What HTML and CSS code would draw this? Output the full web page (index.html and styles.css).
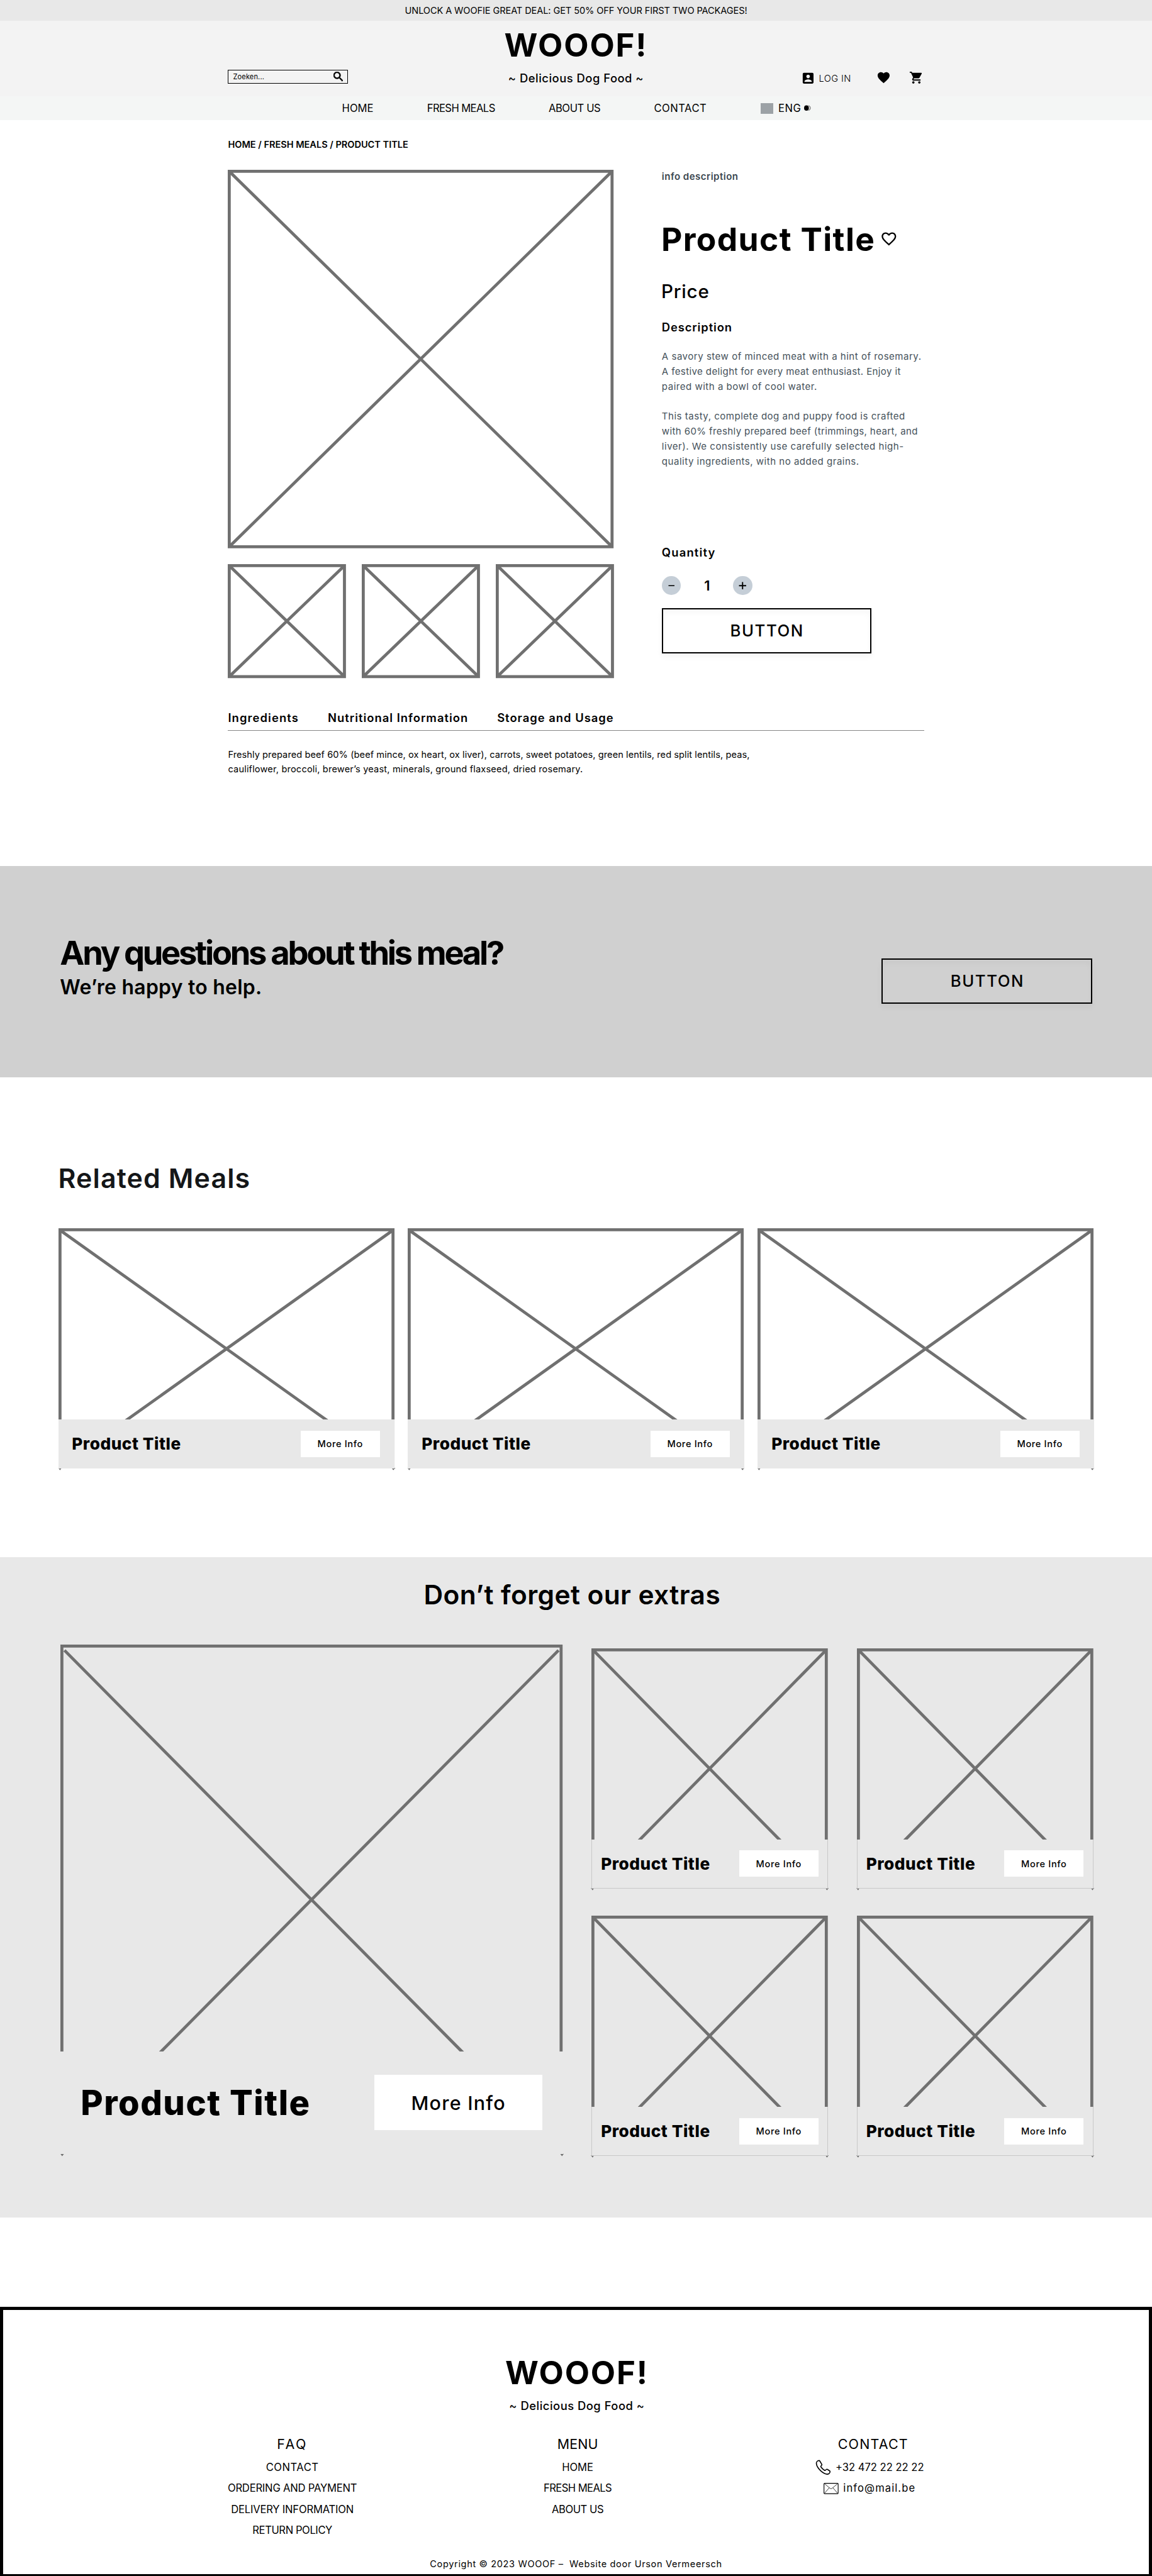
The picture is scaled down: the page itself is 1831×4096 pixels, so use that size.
FILE: index.html
```
<!DOCTYPE html>
<html lang="en">
<head>
<meta charset="utf-8">
<title>WOOOF! – Product</title>
<link rel="stylesheet" href="styles.css">
</head>
<body>
<svg class="defs" width="0" height="0" aria-hidden="true">
  <defs>
    <symbol id="card-wide" viewBox="0 0 560 402"><path d="M2.5 399.5V2.5H557.5V399.5M5 5L555 397M555 5L5 397"/><path class="tick" d="M-.5 399.500H5.500L2.500 403.500zM555 399.500H561.500L558 403.500z"/></symbol>
    <symbol id="card-small" viewBox="0 0 394 402"><path d="M2.5 399.5V2.5H391.5V399.5M4 4L390 397M390 4L4 397"/><path class="tick" d="M-1 399.500H4.500L2 403.500zM390 399.500H395.500L392.500 403.500z"/></symbol>
  </defs>
</svg>

<div class="promo">UNLOCK A WOOFIE GREAT DEAL: GET 50% OFF YOUR FIRST TWO PACKAGES!</div>

<header class="header">
  <div class="search"><span>Zoeken...</span>
    <svg width="16" height="16" viewBox="3 3 17.500 17.500"><path d="M15.500 14h-.79l-.28-.27A6.471 6.471 0 0 0 16 9.500 6.500 6.500 0 1 0 9.500 16c1.610 0 3.090-.59 4.230-1.570l.27.28v.79l5 4.990L20.490 19l-4.990-5zm-6 0C7.010 14 5 11.990 5 9.500S7.010 5 9.500 5 14 7.010 14 9.500 11.990 14 9.500 14z" stroke="#000" stroke-width=".8"/></svg>
  </div>
  <div class="brand"><div class="logo">WOOOF!</div><div class="tagline">~ Delicious Dog Food ~</div></div>
  <div class="account">
    <svg width="24" height="24" viewBox="0 0 24 24"><path d="M3 5v14c0 1.100.89 2 2 2h14c1.100 0 2-.9 2-2V5c0-1.100-.9-2-2-2H5c-1.110 0-2 .9-2 2zm12 4c0 1.660-1.340 3-3 3s-3-1.340-3-3 1.340-3 3-3 3 1.340 3 3zm-9 8c0-2 4-3.100 6-3.100s6 1.100 6 3.100v1H6v-1z"/></svg>
    <span class="login">LOG IN</span>
    <svg class="fav" width="24" height="24" viewBox="0 0 24 24"><path d="M12 21.350l-1.450-1.320C5.400 15.360 2 12.280 2 8.500 2 5.420 4.420 3 7.500 3c1.740 0 3.410.81 4.500 2.090C13.090 3.810 14.760 3 16.500 3 19.580 3 22 5.420 22 8.500c0 3.780-3.400 6.860-8.550 11.540L12 21.350z"/></svg>
    <svg class="cart" width="24" height="24" viewBox="0 0 24 24"><path d="M7 18c-1.100 0-1.990.9-1.990 2S5.900 22 7 22s2-.9 2-2-.9-2-2-2zM1 2v2h2l3.600 7.590-1.350 2.450c-.16.28-.25.61-.25.96 0 1.100.9 2 2 2h12v-2H7.420c-.14 0-.25-.11-.25-.25l.03-.12.9-1.630h7.450c.75 0 1.410-.41 1.750-1.030l3.580-6.490A1 1 0 0 0 20 4H5.210l-.94-2H1zm16 16c-1.100 0-1.990.9-1.990 2s.89 2 1.990 2 2-.9 2-2-.9-2-2-2z"/></svg>
  </div>
</header>

<nav class="nav">
  <a class="n0">HOME</a><a class="n1">FRESH MEALS</a><a class="n2">ABOUT US</a><a class="n3">CONTACT</a>
  <span class="lang"><i class="flag"></i><span class="n3">ENG</span>
    <svg width="12" height="10" viewBox="0 0 12 10"><ellipse cx="4" cy="5" rx="4" ry="4.500"/><path d="M7.500 .9A4.300 4.300 0 0 1 7.500 9.100" fill="none" stroke="#000" stroke-width=".7"/></svg>
  </span>
</nav>

<main class="product">
  <div class="crumbs">HOME / FRESH MEALS / PRODUCT TITLE</div>
  <div class="detail">
    <div class="gallery">
      <svg class="ph" width="643" height="631" viewBox="0 0 643 631"><path d="M2.500 2.500H640.500V628.500H2.500ZM5 5L638 626M638 5L5 626"/></svg>
      <div class="thumbs">
        <svg class="ph" width="197" height="190" viewBox="0 0 197 190"><path d="M2.500 2.500H194.500V187.500H2.500ZM5 5L192 185M192 5L5 185"/></svg>
        <svg class="ph" width="197" height="190" viewBox="0 0 197 190"><path d="M2.500 2.500H194.500V187.500H2.500ZM5 5L192 185M192 5L5 185"/></svg>
        <svg class="ph" width="197" height="190" viewBox="0 0 197 190"><path d="M2.500 2.500H194.500V187.500H2.500ZM5 5L192 185M192 5L5 185"/></svg>
      </div>
    </div>
    <div class="info">
      <div class="kicker">info description</div>
      <div class="title-row"><h1>Product Title</h1>
        <svg width="29" height="29" viewBox="0 0 24 24"><path d="M16.500 3c-1.740 0-3.410.81-4.500 2.090C10.910 3.810 9.240 3 7.500 3 4.420 3 2 5.420 2 8.500c0 3.780 3.400 6.860 8.550 11.540L12 21.350l1.450-1.320C18.600 15.360 22 12.280 22 8.500 22 5.420 19.580 3 16.500 3zm-4.400 15.550l-.1.100-.1-.1C7.140 14.240 4 11.390 4 8.500 4 6.500 5.500 5 7.500 5c1.540 0 3.040.99 3.570 2.360h1.870C13.460 5.990 14.960 5 16.500 5c2 0 3.500 1.500 3.500 3.500 0 2.890-3.140 5.740-7.900 10.050z"/></svg>
      </div>
      <div class="price">Price</div>
      <h2 class="desc-h">Description</h2>
      <p class="desc">A savory stew of minced meat with a hint of rosemary.<br><span class="t">A festive delight for every meat enthusiast. Enjoy it</span><br>paired with a bowl of cool water.</p>
      <p class="desc">This tasty, complete dog and puppy food is crafted<br><span class="t">with 60% freshly prepared beef (trimmings, heart, and</span><br>liver). We consistently use carefully selected high-<br>quality ingredients, with no added grains.</p>
      <h2 class="qty-h">Quantity</h2>
      <div class="qty">
        <span class="round"><svg width="32" height="32" viewBox="0 0 32 32"><path d="M11 16H21" stroke="#000" stroke-width="1.600"/></svg></span>
        <span class="count">1</span>
        <span class="round"><svg width="32" height="32" viewBox="0 0 32 32"><path d="M10 16H22M16 10V22" stroke="#000" stroke-width="2"/></svg></span>
      </div>
      <div class="btn buy">BUTTON</div>
    </div>
  </div>
  <div class="tabs"><span>Ingredients</span><span>Nutritional Information</span><span>Storage and Usage</span></div>
  <p class="ingredients">Freshly prepared beef 60% (beef mince, ox heart, ox liver), carrots, sweet potatoes, green lentils, red split lentils, peas,<br><span class="l2">cauliflower, broccoli, brewer’s yeast, minerals, ground flaxseed, dried rosemary.</span></p>
</main>

<section class="cta">
  <div><h2>Any questions about this meal?</h2><p>We’re happy to help.</p></div>
  <div class="btn ask">BUTTON</div>
</section>

<section class="related">
  <h2>Related Meals</h2>
  <div class="cards">
    <article class="card"><svg class="ph"><use href="#card-wide"/></svg><div class="bar"><h3>Product Title</h3><span class="more">More Info</span></div></article>
    <article class="card"><svg class="ph"><use href="#card-wide"/></svg><div class="bar"><h3>Product Title</h3><span class="more">More Info</span></div></article>
    <article class="card"><svg class="ph"><use href="#card-wide"/></svg><div class="bar"><h3>Product Title</h3><span class="more">More Info</span></div></article>
  </div>
</section>

<section class="extras">
  <h2>Don’t forget our extras</h2>
  <div class="extras-row">
    <article class="card big"><svg class="ph" viewBox="0 0 837 851"><path d="M2.500 846V2.500H834.500V846M6.800 9.500L828 839M830.200 9.500L9 839"/><path class="tick" d="M0 849H6L3 853zM833 849H839L836 853z"/></svg><div class="bar"><h3>Product Title</h3><span class="more">More Info</span></div></article>
    <div class="small-grid">
      <article class="card small"><svg class="ph"><use href="#card-small"/></svg><div class="bar"><h3>Product Title</h3><span class="more">More Info</span></div></article>
      <article class="card small"><svg class="ph"><use href="#card-small"/></svg><div class="bar"><h3>Product Title</h3><span class="more">More Info</span></div></article>
      <article class="card small"><svg class="ph"><use href="#card-small"/></svg><div class="bar"><h3>Product Title</h3><span class="more">More Info</span></div></article>
      <article class="card small"><svg class="ph"><use href="#card-small"/></svg><div class="bar"><h3>Product Title</h3><span class="more">More Info</span></div></article>
    </div>
  </div>
</section>

<footer class="footer">
  <div class="brand"><div class="logo">WOOOF!</div><div class="tagline">~ Delicious Dog Food ~</div></div>
  <div class="cols">
    <div class="col"><h4 class="faq">FAQ</h4><a class="n3">CONTACT</a><a>ORDERING AND PAYMENT</a><a>DELIVERY INFORMATION</a><a class="n2">RETURN POLICY</a></div>
    <div class="col"><h4 class="menu">MENU</h4><a class="n0">HOME</a><a class="n1">FRESH MEALS</a><a class="n2">ABOUT US</a></div>
    <div class="col"><h4 class="contact">CONTACT</h4>
      <a class="phone"><svg width="26" height="26" viewBox="0 0 26 26"><path d="M5.600 1.500C3.500 1.800 1.500 3.800 1.600 6.200c.3 4 3.600 9.100 7.400 12.500 3.600 3.200 7.600 5.500 10.700 5.500 2.200 0 4.500-1.700 4.700-3.900.1-.8-.2-1.300-.8-1.700l-3.500-2.300c-.8-.5-1.500-.4-2.100.2l-1.200 1.100c-.5.5-1 .5-1.600.2-2.200-1.300-4.600-3.600-6-5.700-.4-.6-.3-1.100.2-1.600l1-1c.5-.6.6-1.200.1-2L7.400 2.400c-.4-.7-1-1-1.800-.9z" fill="none" stroke="#000" stroke-width="1.700"/></svg><span>+32 472 22 22 22</span></a>
      <a class="mail"><svg width="25" height="19" viewBox="0 0 25 19"><g fill="none" stroke="#000"><rect x=".7" y=".7" width="23.600" height="17.200" rx="1" stroke-width="1.200"/><path d="M1.500 1.300L10.800 9q1.700 1.400 3.400 0L23.500 1.300M1.500 17.300L9.500 8M23.500 17.300L15.500 8" stroke-width=".8"/></g></svg><span>info@mail.be</span></a>
    </div>
  </div>
  <div class="copy">Copyright © 2023 WOOOF –&nbsp; Website door Urson Vermeersch</div>
</footer>
</body>
</html>
```
FILE: styles.css
```
* { box-sizing: border-box; margin: 0; padding: 0; }
html { background: #fff; }
/* The layout is drawn on a 1920px grid and scaled to the 1831px window. */
body { width: 1920px; zoom: .95365; font-family: Inter, "Liberation Sans", sans-serif; color: #000; background: #fff; overflow-x: hidden; }
svg { display: block; flex: none; }
.defs { position: absolute; }
h1, h2, h3, h4 { font-weight: 600; }

.promo { height: 35px; line-height: 36px; text-align: center; background: #e8e8e8; font-size: 15.3px; letter-spacing: -.007em; white-space: nowrap; }

.header { height: 125px; background: #f3f3f3; padding: 0 380px; display: grid; grid-template-columns: 1fr 240px 1fr; align-items: start; }
.search { width: 200px; height: 24px; margin-top: 81px; border: 1.1px solid #000; padding: 0 7px 0 7.5px; display: flex; justify-content: space-between; align-items: center; font-size: 11.6px; letter-spacing: .012em; }
.brand { display: flex; flex-direction: column; align-items: center; white-space: nowrap; }
.logo { font-size: 53.5px; font-weight: 700; line-height: 60px; letter-spacing: .036em; }
.tagline { margin-top: 11.6px; font-size: 19.3px; font-weight: 500; line-height: 28px; letter-spacing: .027em; }
.header .brand { padding: 9.6px 0 0 0; }
.account { margin: 82.5px 1px 0 0; display: flex; justify-content: flex-end; align-items: flex-start; font-size: 15.3px; line-height: 27.6px; }
.account svg:first-child { margin-top: 1px; }
.login { font-weight: 300; letter-spacing: .029em; margin-left: 6px; }
.fav { margin-left: 42px; }
.cart { margin-left: 30.5px; }

.nav { height: 40px; padding: 1px 0 0 570px; background: #f4f6f5; display: flex; align-items: center; gap: 89.3px; font-size: 17.4px; line-height: 39px; white-space: nowrap; }
.n1 { letter-spacing: -.035em; }
.n2 { letter-spacing: -.024em; }
.n3 { letter-spacing: .031em; }
.lang { display: flex; align-items: center; }
.flag { width: 21px; height: 18px; margin-right: 9px; background: #9ca2a6; }
.lang svg { margin-left: 5px; }

.product { padding: 29.5px 380px 149.5px; }
.crumbs { font-size: 15.3px; font-weight: 600; line-height: 24.5px; letter-spacing: -.002em; }
.detail { margin-top: 29.3px; display: grid; grid-template-columns: 643px 1fr; gap: 80px; height: 848px; }
.ph { fill: none; stroke: #707070; stroke-width: 5; overflow: visible; }
.ph .tick, .tick { fill: #707070; stroke: none; }
symbol { overflow: visible; }
.thumbs { margin-top: 26.5px; display: flex; justify-content: space-between; }
.info { white-space: nowrap; }
.kicker { font-size: 15.8px; font-weight: 600; line-height: 24px; letter-spacing: .032em; color: #3b4750; }
.title-row { margin-top: 56.5px; display: flex; align-items: center; }
h1 { font-size: 54px; font-weight: 700; line-height: 70px; letter-spacing: .027em; margin-left: -1px; }
.title-row svg { margin-left: 8px; }
.price { margin-top: 31.5px; font-size: 31px; font-weight: 500; line-height: 40px; letter-spacing: .028em; margin-left: -1px; }
.desc-h, .qty-h { font-size: 19.3px; line-height: 30px; letter-spacing: .047em; margin: 25px 0 21.7px; }
.desc { font-size: 15.8px; line-height: 25px; letter-spacing: .033em; color: #46525b; margin-bottom: 25px; }
.desc .t { letter-spacing: .025em; }
.qty-h { letter-spacing: .064em; margin: 124.1px 0 24.2px; }
.qty { display: flex; align-items: center; }
.round { width: 32px; height: 32px; border-radius: 50%; background: #c5ced7; }
.count { width: 87px; text-align: center; font-size: 23px; font-weight: 600; line-height: 32px; }
.btn { border: 2.1px solid #000; padding: 0 0 0 2px; display: flex; align-items: center; justify-content: center; font-size: 27px; font-weight: 500; letter-spacing: .061em; box-shadow: 0 6px 10px rgba(0,0,0,.045), inset 0 6px 10px rgba(0,0,0,.03); }
.buy { margin-top: 22px; width: 349px; height: 75px; }

.tabs { margin-top: 50.5px; padding-bottom: 6px; border-bottom: 1.1px solid #858585; display: flex; gap: 48.2px; font-size: 19.3px; font-weight: 600; line-height: 30px; letter-spacing: .054em; white-space: nowrap; }
.tabs span:first-child { letter-spacing: .06em; }
.ingredients { margin-top: 28.5px; font-size: 15.3px; line-height: 23.5px; letter-spacing: .005em; white-space: nowrap; }
.l2 { letter-spacing: .012em; }

.cta { height: 353px; padding: 110px 100px 0; background: #d0d0d0; display: flex; justify-content: space-between; align-items: flex-start; white-space: nowrap; }
.cta h2 { font-size: 55px; font-weight: 700; line-height: 70px; letter-spacing: -.063em; }
.cta p { margin-top: 3px; font-size: 33.5px; font-weight: 600; line-height: 40px; letter-spacing: .008em; }
.ask { margin-top: 44.5px; width: 350.5px; height: 75px; }

.related { padding: 138px 97px 147px; }
.related h2 { font-size: 45px; line-height: 60px; letter-spacing: .026em; color: #141618; }
.cards { margin-top: 53px; display: grid; grid-template-columns: repeat(3, 560px); justify-content: space-between; }
.card { position: relative; height: 402px; }
.card .ph { width: 100%; height: 100%; }
.bar { position: absolute; left: 0; right: 0; top: 319px; height: 81.5px; padding: 0 24px 0 22.8px; background: #e8e8e8; display: flex; align-items: center; justify-content: space-between; white-space: nowrap; }
.bar h3 { font-size: 27.5px; font-weight: 800; letter-spacing: .02em; }
.more { width: 132px; height: 44px; padding-top: 1px; background: #fff; display: flex; align-items: center; justify-content: center; font-size: 15.3px; font-weight: 500; letter-spacing: .045em; }

.extras { height: 1101px; padding: 32px 98px 0 101px; background: #e8e8e8; }
.extras > h2 { font-size: 44.5px; line-height: 60px; letter-spacing: .01em; text-align: center; margin-right: 16px; }
.extras-row { margin-top: 53px; display: flex; justify-content: space-between; align-items: flex-start; }
.card.big { width: 837px; height: 851px; }
.big .bar { top: 678.4px; height: 171.600px; padding: 0 33.7px 0 33.5px; }
.big h3 { font-size: 57px; letter-spacing: .028em; }
.big .more { width: 280.400px; height: 92.300px; padding: 0; font-size: 32px; letter-spacing: .04em; }
.small-grid { margin-top: 6.400px; display: grid; grid-template-columns: 394px 394px; column-gap: 48px; row-gap: 44px; }
.small .bar { padding: 0 15px 0 14.500px; border: solid #c8c8c8; border-width: 0 1.100px 1.100px; }

.footer { margin-top: 148.500px; height: 449px; border: 5.300px solid #000; border-bottom-width: 3.200px; padding-top: 74.500px; white-space: nowrap; }
.footer .brand { padding-left: 3px; }
.cols { margin: 34.600px 0 0 374px; display: grid; grid-template-columns: 216px 735px 238px; }
.col { display: flex; flex-direction: column; align-items: center; font-size: 17.400px; line-height: 35px; letter-spacing: -.012em; height: 176.600px; }
h4 { font-size: 22.500px; font-weight: 400; line-height: 30px; margin-bottom: 6.600px; }
.faq { letter-spacing: .12em; }
.menu { letter-spacing: .004em; }
.contact { letter-spacing: .055em; padding-left: 12px; }
.phone, .mail { display: flex; align-items: center; letter-spacing: 0; }
.phone svg { margin-right: 8px; }
.mail { letter-spacing: .065em; }
.mail svg { margin-right: 8px; }
.col .n0 { letter-spacing: 0; }
.col .n1 { letter-spacing: -.035em; }
.col .n2 { letter-spacing: -.025em; }
.col .n3 { letter-spacing: .031em; }
.copy { margin-top: 26.500px; text-align: center; font-size: 15.300px; line-height: 24px; letter-spacing: .043em; }
```
